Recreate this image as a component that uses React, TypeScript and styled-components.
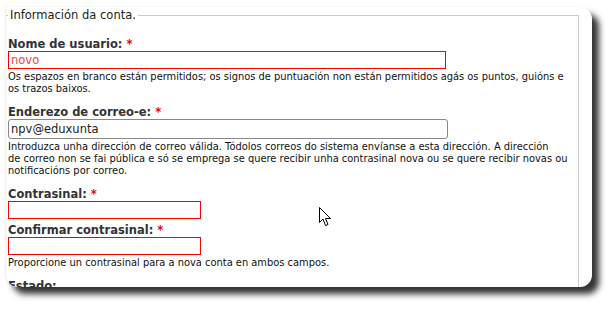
import React from 'react';
import styled, { createGlobalStyle } from 'styled-components';

const GlobalStyle = createGlobalStyle`
  html, body {
    margin: 0;
    padding: 0;
    background: #ffffff;
  }
  body {
    font-family: "DejaVu Sans", Verdana, sans-serif;
    color: #222;
  }
`;

// recorte da captura con sombra
const Stage = styled.div`
  width: 616px;
  height: 311px;
  padding: 7px 0 0 6px;
  box-sizing: border-box;
  position: relative;
`;

const Card = styled.div`
  width: 586px;
  height: 280px;
  background: #fff;
  border-radius: 3px 12px 12px 12px;
  box-shadow: 7px 7px 6px rgba(0, 0, 0, 0.8), -1px 0 2px rgba(0, 0, 0, 0.08);
  overflow: hidden;
`;

const Fieldset = styled.fieldset`
  margin: 1px 13px 0 0;
  padding: 0 2px 0 2px;
  border: 1px solid #ccc;
  border-left: none;
  border-bottom: none;
  min-height: 300px;
`;

const Legend = styled.legend`
  padding: 0 2px;
  font-size: 11.5px;
  line-height: 14px;
  color: #222;
`;

const Field = styled.div<{ $top?: number }>`
  margin-top: ${(p) => p.$top ?? 0}px;
`;

const Label = styled.label`
  display: block;
  font-size: 11.5px;
  font-weight: bold;
  line-height: 14px;
  color: #333;
`;

const Star = styled.span`
  color: #e00;
`;

const Input = styled.div<{ $width: number; $error?: boolean; $height: number }>`
  box-sizing: border-box;
  width: ${(p) => p.$width}px;
  height: ${(p) => p.$height}px;
  border: 1px solid ${(p) => (p.$error ? '#ff0000' : '#888')};
  border-radius: ${(p) => (p.$error ? 0 : 3)}px;
  padding: 0 2px;
  font-size: 11.5px;
  line-height: ${(p) => p.$height - 2}px;
  color: ${(p) => (p.$error ? '#e44' : '#222')};
`;

const Description = styled.div`
  font-size: 9.9px;
  line-height: 12px;
  color: #111;
  padding-top: 2px;
`;

const Cursor = styled.svg`
  position: absolute;
  left: 319px;
  top: 207px;
`;

export default function App() {
  return (
    <>
      <GlobalStyle />
      <Stage>
        <Card>
          <Fieldset>
            <Legend>Información da conta.</Legend>
            <Field $top={15}>
              <Label>
                Nome de usuario: <Star>*</Star>
              </Label>
              <Input $width={438} $height={18} $error>
                novo
              </Input>
              <Description>
                Os espazos en branco están permitidos; os signos de puntuación non están permitidos agás os puntos, guións e os trazos baixos.
              </Description>
            </Field>
            <Field $top={10}>
              <Label>
                Enderezo de correo-e: <Star>*</Star>
              </Label>
              <Input $width={440} $height={20}>
                npv@eduxunta
              </Input>
              <Description>
                Introduzca unha dirección de correo válida. Tódolos correos do sistema envíanse a esta dirección. A dirección de{'\u00a0'}correo non se fai pública e só se emprega se quere recibir unha contrasinal nova ou se quere recibir novas ou notificacións por correo.
              </Description>
            </Field>
            <Field $top={10}>
              <Label>
                Contrasinal: <Star>*</Star>
              </Label>
              <Input $width={193} $height={18} $error />
            </Field>
            <Field $top={4}>
              <Label>
                Confirmar contrasinal: <Star>*</Star>
              </Label>
              <Input $width={193} $height={18} $error />
              <Description>Proporcione un contrasinal para a nova conta en ambos campos.</Description>
            </Field>
            <Field $top={10}>
              <Label>Estado:</Label>
            </Field>
          </Fieldset>
        </Card>
        <Cursor width="13" height="20" viewBox="0 0 13 20">
          <path
            d="M0.5 0.5 L0.5 15.5 L4 12 L6.5 18.5 L9 17.5 L6.5 11.5 L11.5 11.5 Z"
            fill="#fff"
            stroke="#000"
            strokeWidth="1"
            strokeLinejoin="miter"
          />
        </Cursor>
      </Stage>
    </>
  );
}
